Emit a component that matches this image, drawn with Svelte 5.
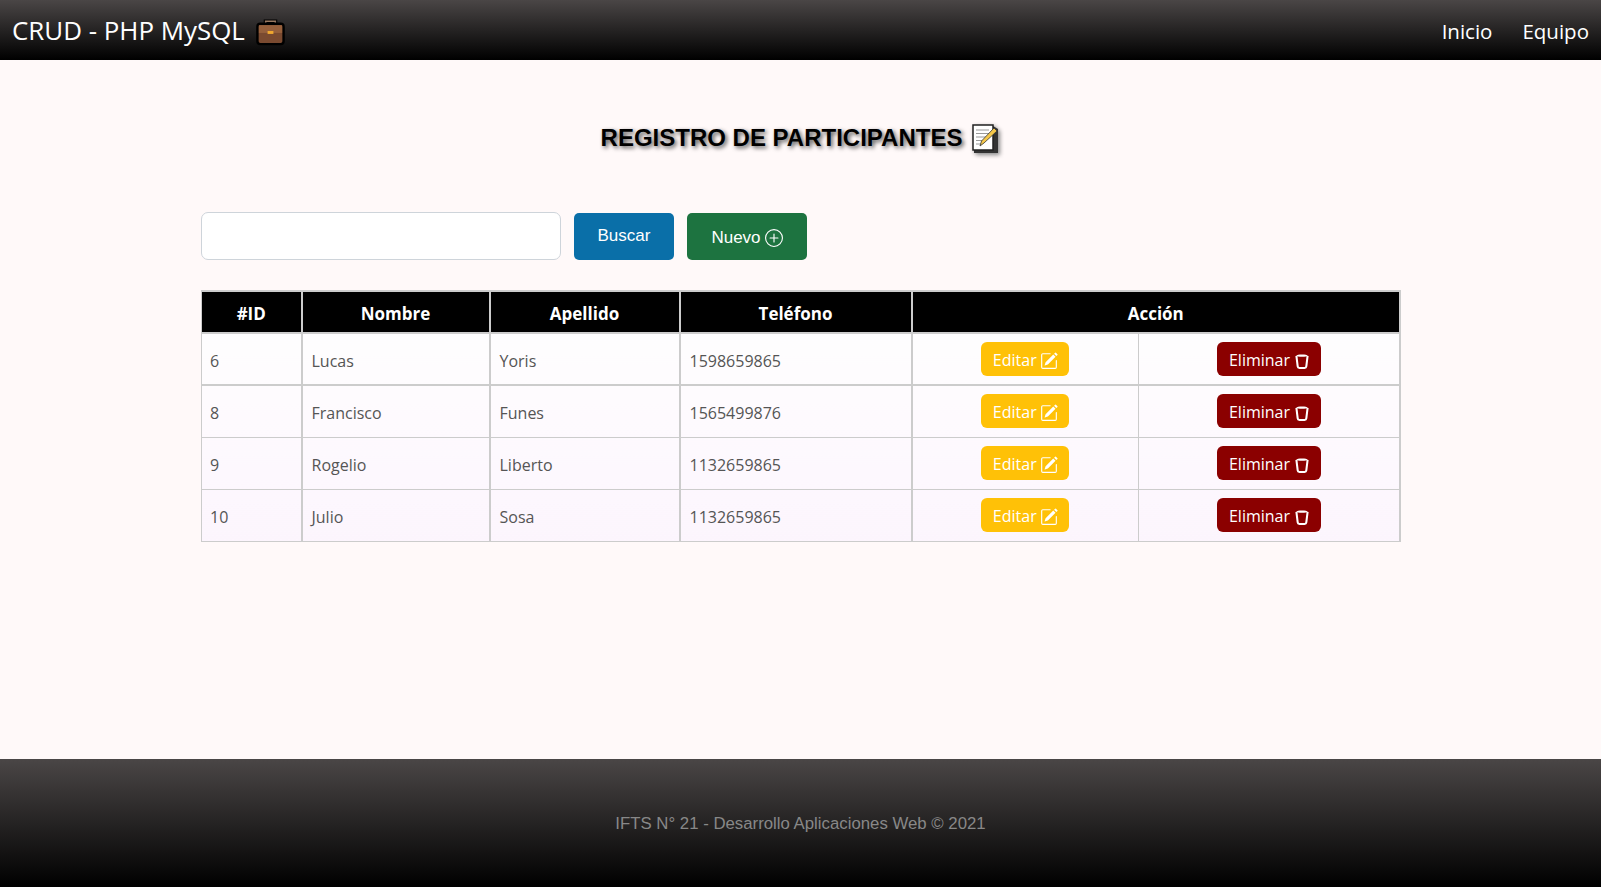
<script>
  const rows = [
    { id: 6, nombre: 'Lucas', apellido: 'Yoris', tel: '1598659865' },
    { id: 8, nombre: 'Francisco', apellido: 'Funes', tel: '1565499876' },
    { id: 9, nombre: 'Rogelio', apellido: 'Liberto', tel: '1132659865' },
    { id: 10, nombre: 'Julio', apellido: 'Sosa', tel: '1132659865' }
  ];
</script>

<div class="page">
  <header class="nav">
    <div class="brand">
      <span>CRUD - PHP MySQL</span>
      <svg class="case" viewBox="0 0 32 32" width="31" height="31" aria-hidden="true">
        <path d="M11 9V5.500h10V9" fill="none" stroke="#000" stroke-width="4"/>
        <path d="M11 9V5.500h10V9" fill="none" stroke="#9a7a62" stroke-width="1.600"/>
        <rect x="2.500" y="8" width="27" height="21" rx="3" fill="#7a4a30" stroke="#000" stroke-width="2.500"/>
        <rect x="4" y="9.500" width="24" height="8" fill="#96603c"/>
        <rect x="13" y="15.500" width="6" height="3" fill="#f0a830"/>
      </svg>
    </div>
    <nav class="links"><a href="#inicio">Inicio</a><a href="#equipo">Equipo</a></nav>
  </header>

  <main class="main">
    <h1 class="title">
      <span>REGISTRO DE PARTICIPANTES</span>
      <svg class="memo" viewBox="0 0 30 30" width="30" height="30" aria-hidden="true">
        <path d="M3 2h19l5 3v24H3z" fill="#333" transform="translate(1 1)"/>
        <path d="M3 2h20v25H3z" fill="#fff" stroke="#222" stroke-width="1.500"/>
        <path d="M6 7h13M6 10.500h13M6 14h10M6 17.500h8M6 21h6" stroke="#9a9a9a" stroke-width="1.200"/>
        <path d="M10 23l1.500-5L24 5l3 3-13 12z" fill="#f5c84a" stroke="#333" stroke-width=".8"/>
      </svg>
    </h1>

    <form class="search" onsubmit={(e) => e.preventDefault()}>
      <input class="field" type="text" aria-label="Buscar" />
      <button class="btn buscar" type="submit">Buscar</button>
      <button class="btn nuevo" type="button">
        <span class="lower">Nuevo</span>
        <svg class="lower" viewBox="0 0 16 16" width="18" height="18" fill="currentColor" aria-hidden="true">
          <path d="M8 15A7 7 0 1 1 8 1a7 7 0 0 1 0 14zm0 1A8 8 0 1 0 8 0a8 8 0 0 0 0 16z"/>
          <path d="M8 4a.5.5 0 0 1 .5.5v3h3a.5.5 0 0 1 0 1h-3v3a.5.5 0 0 1-1 0v-3h-3a.5.5 0 0 1 0-1h3v-3A.5.5 0 0 1 8 4z"/>
        </svg>
      </button>
    </form>

    <table class="grid">
      <colgroup>
        <col class="c1" /><col class="c2" /><col class="c3" /><col class="c4" /><col class="c5" /><col />
      </colgroup>
      <thead>
        <tr>
          <th>#ID</th><th>Nombre</th><th>Apellido</th><th>Teléfono</th><th colspan="2">Acción</th>
        </tr>
      </thead>
      <tbody>
        {#each rows as r}
          <tr>
            <td>{r.id}</td>
            <td>{r.nombre}</td>
            <td>{r.apellido}</td>
            <td>{r.tel}</td>
            <td class="act">
              <a class="pill editar" href="#editar">
                Editar
                <svg class="ico" viewBox="0 0 16 16" width="18" height="18" fill="currentColor" aria-hidden="true">
                  <path d="M15.500 1.900a.5.5 0 0 1 0 .7l-1 1-2-2 1-1a.5.5 0 0 1 .7 0l1.300 1.300zM13.800 4.300l-2-2-6.800 6.800a.5.5 0 0 0-.1.200l-.8 2.400a.25.25 0 0 0 .3.300l2.400-.8a.5.5 0 0 0 .2-.1l6.800-6.800z"/>
                  <path fill-rule="evenodd" d="M1 13.500A1.500 1.500 0 0 0 2.500 15h11a1.500 1.500 0 0 0 1.500-1.500v-6a.5.5 0 0 0-1 0v6a.5.5 0 0 1-.5.500h-11a.5.5 0 0 1-.5-.5v-11a.5.5 0 0 1 .5-.5H9a.5.5 0 0 0 0-1H2.500A1.500 1.500 0 0 0 1 2.500v11z"/>
                </svg>
              </a>
            </td>
            <td class="act">
              <a class="pill eliminar" href="#eliminar">
                Eliminar
                <svg class="ico trash" viewBox="1.500 1 13 14.500" width="14" height="16" aria-hidden="true">
                  <path d="M2.800 3.500c0-1.800 10.400-1.800 10.400 0 0 1-10.400 1-10.400 0z" fill="#fff"/>
                  <path d="M2.800 3.500l1.200 9.800c.1.900.8 1.400 1.600 1.400h4.800c.8 0 1.500-.5 1.600-1.400l1.200-9.800" fill="none" stroke="#fff" stroke-width="1.900"/>
                </svg>
              </a>
            </td>
          </tr>
        {/each}
      </tbody>
    </table>
  </main>

  <footer class="foot">IFTS N° 21 - Desarrollo Aplicaciones Web © 2021</footer>
</div>

<style>
  :global(body) {
    margin: 0;
    background: #fff9f9;
  }
  .page {
    display: flex;
    flex-direction: column;
    min-height: 887px;
    font-family: "Open Sans", "Noto Sans", sans-serif;
  }
  .nav {
    height: 60px;
    display: flex;
    align-items: center;
    justify-content: space-between;
    padding: 0 12px;
    background: linear-gradient(#4a4646, #000);
    color: #fff;
    box-sizing: border-box;
  }
  .brand {
    display: flex;
    align-items: center;
    gap: 10px;
    font-size: 25.900px;
    line-height: 1;
    padding-top: 2px;
  }
  .links {
    display: flex;
    gap: 30px;
    font-size: 20.500px;
    padding-top: 2px;
  }
  .links a {
    color: #fff;
    text-decoration: none;
  }
  .main {
    flex: 1;
    display: flex;
    flex-direction: column;
    padding: 0 201px;
  }
  .title {
    margin: 60px 0 0;
    height: 36px;
    display: flex;
    align-items: center;
    justify-content: center;
    gap: 8px;
    font: bold 24px "Liberation Sans", Arial, sans-serif;
    color: #000;
    text-shadow: 2px 2px 4px #555;
  }
  .memo {
    filter: drop-shadow(2px 2px 2px #888);
  }
  .search {
    display: flex;
    align-items: center;
    margin-top: 56px;
  }
  .field {
    width: 360px;
    height: 48px;
    box-sizing: border-box;
    border: 1px solid #ced4da;
    border-radius: 7px;
    background: #fff;
    margin-right: 13px;
  }
  .btn {
    height: 47px;
    border: 1px solid transparent;
    border-radius: 5px;
    color: #fff;
    font: 17px "Liberation Sans", Arial, sans-serif;
    display: flex;
    align-items: center;
    justify-content: center;
    gap: 4px;
    padding: 0;
  }
  .buscar {
    width: 100px;
    margin-right: 13px;
    background: #0a6fa8;
    padding-bottom: 1px;
  }
  .nuevo {
    width: 120px;
    background: #1d7340;
  }
  .lower {
    position: relative;
    top: 2px;
  }
  .grid {
    margin-top: 30px;
    width: 1200px;
    border-collapse: collapse;
    table-layout: fixed;
    border: 1px solid #ccc;
    border-right-width: 2px;
    font-size: 16px;
    color: #555;
    background: linear-gradient(#fff, #fcf5fd);
  }
  .c1 { width: 100px; }
  .c2 { width: 188px; }
  .c3 { width: 190px; }
  .c4 { width: 232px; }
  .c5 { width: 227px; }
  th {
    height: 38px;
    padding: 2px 0 0;
    background: #000;
    color: #fff;
    font-weight: 700;
    font-size: 17px;
    border: 2px solid #ccc;
    border-left-width: 1px;
  }
  th:not(:first-child) {
    border-left-width: 2px;
  }
  td {
    height: 52px;
    padding: 4px 9px 0;
    border: 1px solid #ccc;
    box-sizing: border-box;
  }
  td:first-child {
    padding-left: 8px;
  }
  tr:first-child td {
    border-bottom-width: 2px;
  }
  td:nth-child(-n+4) {
    border-right-width: 2px;
  }
  td:last-child {
    border-right-width: 2px;
  }
  td.act {
    text-align: center;
    padding: 0 8px;
  }
  .pill {
    display: inline-flex;
    align-items: center;
    justify-content: center;
    gap: 3px;
    height: 34px;
    box-sizing: border-box;
    padding-top: 2px;
    border-radius: 6px;
    color: #fff;
    text-decoration: none;
    vertical-align: middle;
  }
  .ico {
    position: relative;
    top: 1px;
  }
  .trash {
    margin-left: 2px;
  }
  .editar {
    width: 88px;
    background: #ffc107;
  }
  .eliminar {
    width: 104px;
    background: #8b0000;
  }
  .foot {
    height: 128px;
    box-sizing: border-box;
    padding-top: 1px;
    display: flex;
    align-items: center;
    justify-content: center;
    background: linear-gradient(#4a4646, #000);
    color: #888;
    font: 16.800px "Liberation Sans", Arial, sans-serif;
  }
</style>
